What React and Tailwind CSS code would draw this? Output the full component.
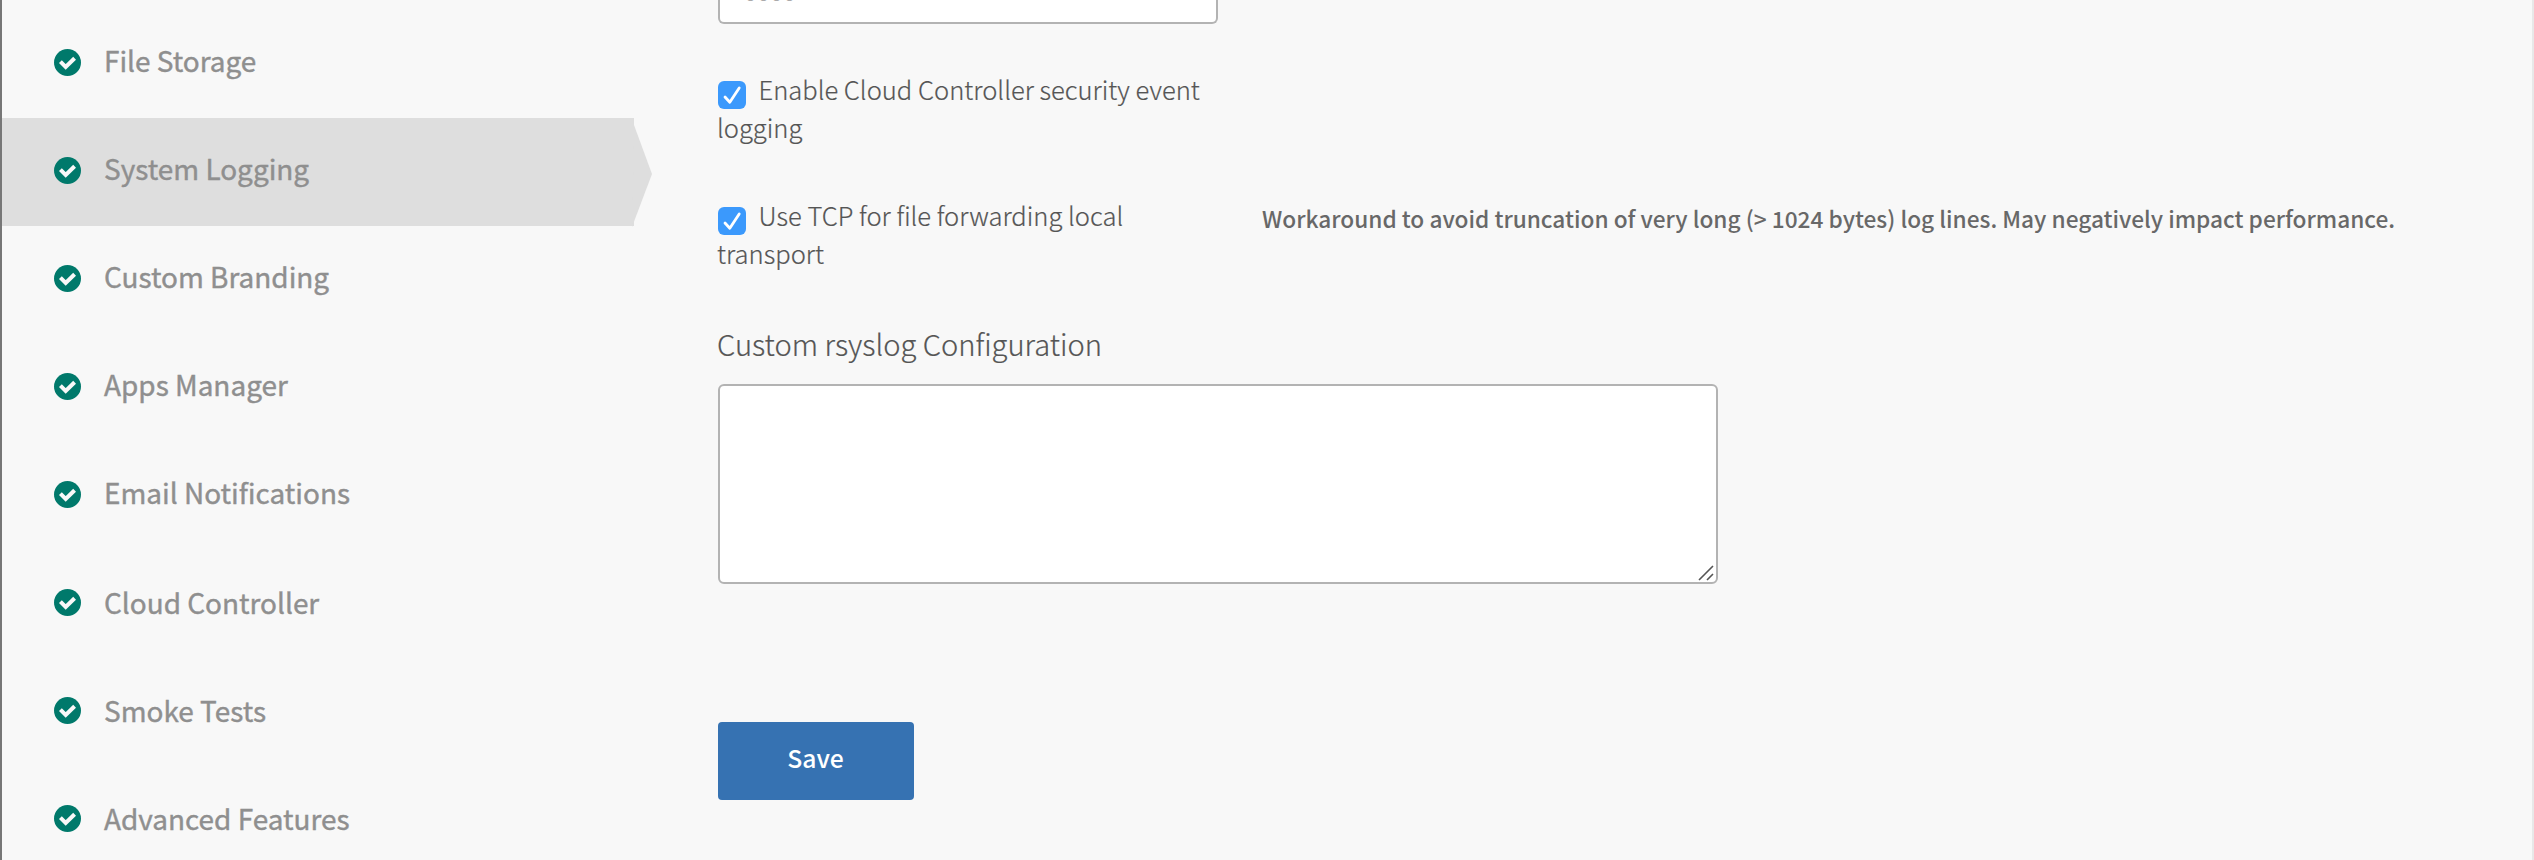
const ITEMS = [
  { label: "File Storage" },
  { label: "System Logging", active: true },
  { label: "Custom Branding" },
  { label: "Apps Manager" },
  { label: "Email Notifications" },
  { label: "Cloud Controller", low: true },
  { label: "Smoke Tests", low: true },
  { label: "Advanced Features", low: true },
];

function StatusIcon() {
  return (
    <svg className="mb-[3px] ml-[52px] size-[27px] shrink-0" viewBox="0 0 27 27">
      <circle cx="13.5" cy="13.5" r="13.5" fill="#00796b" />
      <path d="M6.4 12.6 L11.7 17.9 L20.6 9.2" fill="none" stroke="#f8f8f8" strokeWidth="4" />
    </svg>
  );
}

function NavItem({ label, active, low }) {
  return (
    <li className={active ? "relative flex h-[108px] w-[632px] items-center bg-[#dedede]" : "flex h-[108px] w-[632px] items-center"}>
      <StatusIcon />
      <span
        className={
          low
            ? "ml-[23px] pb-[5px] text-[27.95px] leading-[40px] text-[#8f8f8f] [-webkit-text-stroke:0.4px_#8f8f8f]"
            : "ml-[23px] pb-[9px] text-[27.95px] leading-[40px] text-[#8f8f8f] [-webkit-text-stroke:0.4px_#8f8f8f]"
        }
      >
        {label}
      </span>
      {active && (
        <svg className="absolute top-[7px] left-[630px] h-[102px] w-5" viewBox="0 0 20 102">
          <path d="M2 0 L20 49 L0 102 Z" fill="#dedede" />
        </svg>
      )}
    </li>
  );
}

function Checkbox() {
  return (
    <svg className="mr-[12.5px] inline-block h-[28px] w-[28px] align-[-9px]" viewBox="0 0 28 28">
      <rect width="28" height="28" rx="6" fill="#3b99fc" />
      <path d="M7 16 L11.8 21.3 L21.2 7" fill="none" stroke="#fff" strokeWidth="2.8" strokeLinecap="round" strokeLinejoin="round" />
    </svg>
  );
}

function CheckRow({ first, second, help }) {
  return (
    <div className="flex h-[126px]">
      <label className="w-[544px] text-[25.55px] leading-[38px] font-light text-[#555] [-webkit-text-stroke:0.2px_#555]">
        <span className="block h-[38px] whitespace-nowrap"><Checkbox />{first}</span>
        <span className="-ml-[1px] block">{second}</span>
      </label>
      {help && <p className="pt-[4px] text-[22.67px] leading-[38px] font-medium whitespace-nowrap text-[#686868]">{help}</p>}
    </div>
  );
}

export default function App() {
  return (
    <div className="flex h-[860px] w-[2534px] overflow-hidden border-r-2 border-l-2 border-r-[#e8e8e8] border-l-[#777] bg-[#f8f8f8] font-['Noto_Sans_CJK_SC',sans-serif]">
      <nav className="w-[716px] shrink-0 pt-[10px]">
        <ul>
          {ITEMS.map((item) => <NavItem key={item.label} {...item} />)}
        </ul>
      </nav>
      <main className="flex flex-1 flex-col items-start">
        <div className="h-[24px] w-[500px] rounded-b-[6px] border-2 border-t-0 border-[#b3b3b3] bg-white pl-[24px]">
          <div className="h-[1px] overflow-hidden text-[23.4px] leading-[38px] text-[#aaa]">
            <span className="-mt-[28px] block">0000</span>
          </div>
        </div>
        <div className="pt-[46px]">
          <CheckRow first="Enable Cloud Controller security event" second="logging" />
          <CheckRow
            first="Use TCP for file forwarding local"
            second="transport"
            help="Workaround to avoid truncation of very long (> 1024 bytes) log lines. May negatively impact performance."
          />
        </div>
        <h2 className="mt-[1px] -ml-[1px] h-[61px] text-[29.1px] leading-[40px] font-light text-[#555] [-webkit-text-stroke:0.2px_#555]">
          Custom rsyslog Configuration
        </h2>
        <div className="flex h-[200px] w-[1000px] items-end justify-end rounded-[6px] border-2 border-[#b3b3b3] bg-white">
          <svg className="mr-[2px] mb-[1px] size-[16px]" viewBox="0 0 16 16">
            <path d="M1 15 L15 1 M9 15 L15 9" stroke="#555" strokeWidth="1.6" />
          </svg>
        </div>
        <button className="mt-[138px] flex h-[78px] w-[196px] items-center justify-center rounded-[4px] bg-[#3672b2] pr-[1px] pb-[9px] text-[24.7px] leading-[40px] font-medium text-white">
          Save
        </button>
      </main>
    </div>
  );
}
